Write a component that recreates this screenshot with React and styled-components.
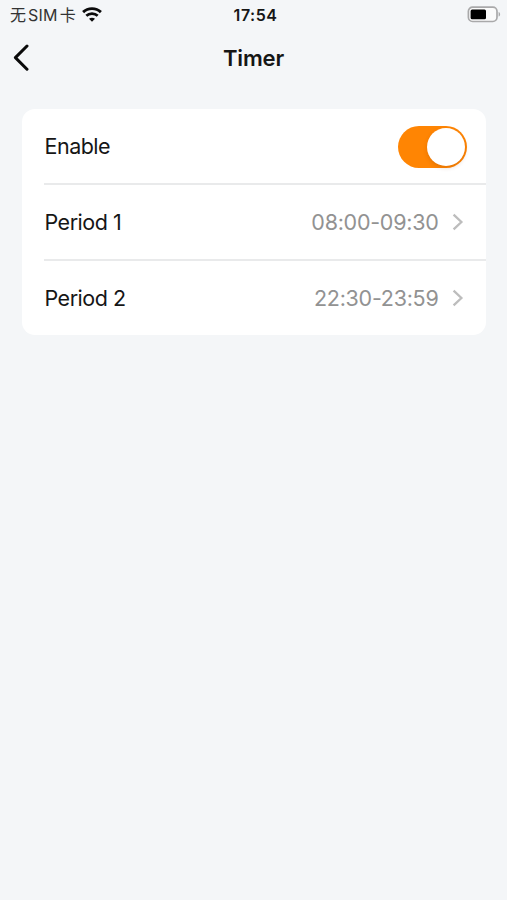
import React, { useState } from 'react'
import styled, { createGlobalStyle } from 'styled-components'

const periods = [
  { name: 'Period 1', time: '08:00-09:30' },
  { name: 'Period 2', time: '22:30-23:59' },
]

function App() {
  const [enabled, setEnabled] = useState(true)

  return (
    <Page>
      <GlobalStyle />
      <StatusBar>
        <Carrier>
          <CarrierName>
            <span>无</span>
            <b>SIM</b>
            <span>卡</span>
          </CarrierName>
          <WifiIcon />
        </Carrier>
        <Clock>17:54</Clock>
        <BatteryIcon />
      </StatusBar>
      <Header>
        <BackButton aria-label="Back">
          <svg width="18" height="27" viewBox="0 0 18 27">
            <path d="M15 2 L3.4 13.6 L15 25.2" />
          </svg>
        </BackButton>
        <Title>Timer</Title>
      </Header>
      <Card>
        <Row>
          <Label>Enable</Label>
          <Switch
            role="switch"
            aria-checked={enabled}
            $on={enabled}
            onClick={() => setEnabled(!enabled)}
          >
            <Knob />
          </Switch>
        </Row>
        {
          periods.map((item) => (
            <Row key={item.name} $link>
              <Label>{item.name}</Label>
              <Value>{item.time}</Value>
              <Chevron width="12" height="18" viewBox="0 0 12 18">
                <path d="M1.6 1.6 L9.4 9 L1.6 16.4" />
              </Chevron>
            </Row>
          ))
        }
      </Card>
    </Page>
  )
}

function WifiIcon() {
  return (
    <svg width="20" height="15" viewBox="0 0 20 15" fill="none" stroke="#0b0b0b">
      <path d="M1.1 5.1 C6 0.4 14 0.4 18.9 5.1" strokeWidth="2.9" />
      <path d="M4.3 8.8 C7.4 5.9 12.6 5.9 15.7 8.8" strokeWidth="2.7" />
      <path d="M10 14.8 L7 11.8 C8.7 10.4 11.3 10.4 13 11.8 Z" fill="#0b0b0b" stroke="none" />
    </svg>
  )
}

function BatteryIcon() {
  return (
    <svg width="34" height="17" viewBox="0 0 34 17">
      <rect x="1.4" y="1.1" width="28.6" height="14.4" rx="4.2" fill="#fbfbfb" stroke="#a9a9aa" strokeWidth="1.7" />
      <rect x="3.6" y="3.4" width="15.4" height="9.9" rx="1.5" fill="#000" />
      <path d="M31.6 6 C33.6 6.6 33.6 10 31.6 10.6 Z" fill="#a9a9aa" />
    </svg>
  )
}

export default App

const GlobalStyle = createGlobalStyle`
  * {
    box-sizing: border-box;
  }
  body {
    margin: 0;
    background: #f4f6f8;
    font-family: Inter, "Noto Sans CJK SC", sans-serif;
  }
  button {
    padding: 0;
    border: 0;
    background: none;
  }
`

const Page = styled.div`
  min-height: 100vh;
  background: #f4f6f8;
  color: #161616;
`

const StatusBar = styled.div`
  display: grid;
  grid-template-columns: 1fr auto 1fr;
  align-items: center;
  height: 28px;
  padding: 0 6px 0 10px;
  > svg {
    justify-self: end;
  }
`

const Carrier = styled.div`
  display: flex;
  align-items: center;
  gap: 6px;
`

const CarrierName = styled.div`
  display: flex;
  align-items: center;
  gap: 2px;
  padding-top: 2px;
  color: #333;
  font-size: 16px;
  line-height: 20px;
  b {
    font-weight: 400;
    letter-spacing: 0.2px;
  }
`

const Clock = styled.div`
  padding-top: 1px;
  font-size: 16px;
  font-weight: 600;
  letter-spacing: 0.5px;
`

const Header = styled.div`
  display: grid;
  grid-template-columns: 1fr auto 1fr;
  align-items: center;
  height: 59px;
  padding: 0 12px;
`

const BackButton = styled.button`
  display: flex;
  justify-self: start;
  path {
    fill: none;
    stroke: #0a0a0a;
    stroke-width: 3;
    stroke-linecap: round;
    stroke-linejoin: round;
  }
`

const Title = styled.h1`
  margin: 0;
  font-size: 22px;
  font-weight: 600;
  letter-spacing: -0.15px;
`

const Card = styled.div`
  margin: 22px 21.5px 0 22px;
  padding-left: 22px;
  border-radius: 13px;
  background: #fff;
`

const Row = styled.div`
  display: flex;
  align-items: center;
  height: 74px;
  padding-right: ${({ $link }) => ($link ? '22px' : '19px')};
  & + & {
    height: 76px;
    border-top: 2px solid #e9eaeb;
  }
`

const Label = styled.div`
  flex: 1;
  padding-left: 0.5px;
  font-size: 21.5px;
  letter-spacing: -0.5px;
`

const Value = styled.div`
  margin-right: 13px;
  color: #929292;
  font-size: 21.5px;
  letter-spacing: -0.26px;
`

const Chevron = styled.svg`
  path {
    fill: none;
    stroke: #bdbdbd;
    stroke-width: 2.3;
  }
`

const Switch = styled.button`
  display: flex;
  justify-content: ${({ $on }) => ($on ? 'flex-end' : 'flex-start')};
  width: 69px;
  height: 42px;
  margin-top: 1px;
  padding: 2px;
  border-radius: 21px;
  background: ${({ $on }) => ($on ? '#ff8503' : '#e3e3e5')};
`

const Knob = styled.span`
  width: 38px;
  height: 38px;
  border-radius: 50%;
  background: #fff;
  box-shadow: 0 2px 4px rgba(120, 50, 0, 0.2);
`
